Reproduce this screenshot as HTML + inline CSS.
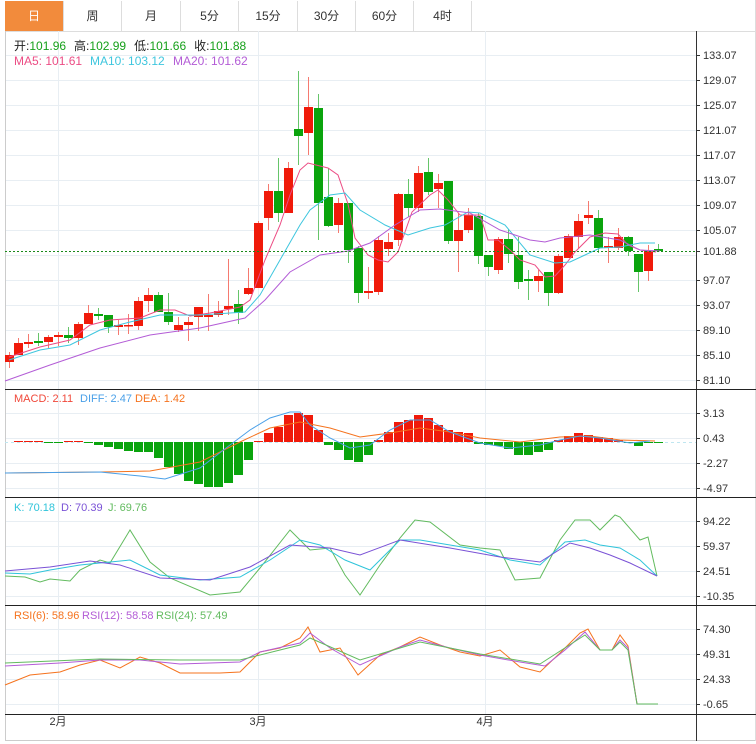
<!DOCTYPE html>
<html><head><meta charset="utf-8">
<style>
body{margin:0;background:#fff;width:756px;height:744px;overflow:hidden;font-family:"Liberation Sans","Noto Sans CJK SC",sans-serif;}
.tabs{position:absolute;left:5px;top:1px;height:30px;width:750px;border-bottom:1px solid #ddd;}
.tab{position:absolute;top:0;height:30px;line-height:30px;text-align:center;font-size:12px;color:#333;border-right:1px solid #ddd;}
svg{position:absolute;left:0;top:0}
.lb{font-size:12px}
</style></head><body>
<div class="tabs">
<div class="tab" style="left:0;width:58px;background:#f28b3c;color:#fff">日</div>
<div class="tab" style="left:59px;width:57px">周</div>
<div class="tab" style="left:117px;width:58px">月</div>
<div class="tab" style="left:176px;width:57px">5分</div>
<div class="tab" style="left:234px;width:58px">15分</div>
<div class="tab" style="left:293px;width:57px">30分</div>
<div class="tab" style="left:351px;width:57px">60分</div>
<div class="tab" style="left:409px;width:57px">4时</div>
</div>
<svg id="s" width="756" height="744" style="top:0" font-family="Liberation Sans, Noto Sans CJK SC, sans-serif" font-size="11"></svg>
<script>
var s=document.getElementById('s'),h='';
function L(x1,y1,x2,y2,c,w,d){h+='<line x1="'+x1+'" y1="'+y1+'" x2="'+x2+'" y2="'+y2+'" stroke="'+c+'" stroke-width="'+(w||1)+'"'+(d?' stroke-dasharray="'+d+'"':'')+'/>';}
function P(a,c){var p=[];for(var i=0;i<a.length;i+=2)p.push(a[i]+','+a[i+1]);h+='<polyline fill="none" stroke="'+c+'" stroke-width="1" points="'+p.join(' ')+'"/>';}
function T(x,y,t,c,a,cl){h+='<text x="'+x+'" y="'+y+'" fill="'+c+'"'+(a?' text-anchor="'+a+'"':'')+(cl?' class="lb"':'')+'>'+t+'</text>';}
var G='#e8eef3';
[55,80,105,130,155,180,205,230,255,280,305,330,355,380].forEach(function(y){L(5,y+.5,696,y+.5,G)});
[413,438,463,488,521,546,571,596,629,654,679,704].forEach(function(y){L(5,y+.5,696,y+.5,G)});
[58,258,485].forEach(function(x){L(x+.5,31,x+.5,715,G)});
L(5.5,31,5.5,740,'#ccc');L(5,740.5,756,740.5,'#ccc');L(755.5,0,755.5,741,'#ddd');
L(696.5,31,696.5,741,'#333');
[[55,'133.07'],[80,'129.07'],[105,'125.07'],[130,'121.07'],[155,'117.07'],[180,'113.07'],[205,'109.07'],[230,'105.07'],[280,'97.07'],[305,'93.07'],[330,'89.10'],[355,'85.10'],[380,'81.10'],[251,'101.88'],
[413,'3.13'],[438,'0.43'],[463,'-2.27'],[488,'-4.97'],[521,'94.22'],[546,'59.37'],[571,'24.51'],[596,'-10.35'],[629,'74.30'],[654,'49.31'],[679,'24.33'],[704,'-0.65']].forEach(function(a){L(696,a[0]+.5,700,a[0]+.5,'#333');T(703,a[0]+4,a[1],'#333')});
[389.5,497.5,605.5,714.5].forEach(function(y){L(5,y,756,y,'#222')});
T(58,725,'2月','#333','middle');T(258,725,'3月','#333','middle');T(485,725,'4月','#333','middle');
var C=[[9,355,362,352,368,1],[18,343,355,338,355,1],[28,342,344,334,348,1],[38,341,343,333,346,0],[48,337,342,335,348,1],[58,335,337,332,346,1],[68,335,338,327,343,0],[78,324,338,322,345,1],[88,313,324,305,324,1],[98,314,316,308,320,0],[108,315,327,315,333,0],[118,325,327,320,335,1],[128,325,326,314,334,1],[138,301,326,297,330,1],[148,295,301,288,312,1],[158,295,312,292,312,0],[168,312,322,293,325,0],[178,325,330,317,332,1],[188,322,325,317,341,1],[198,307,317,307,331,1],[208,315,317,294,331,1],[218,311,315,301,317,1],[228,306,309,259,315,1],[238,304,313,290,324,0],[248,288,294,268,295,1],[258,223,288,221,288,1],[268,191,218,184,230,1],[278,191,213,158,222,0],[288,168,213,162,213,1],[298,129,136,71,165,0],[308,107,133,77,155,1],[318,108,203,94,240,0],[328,197,226,168,227,0],[338,203,225,198,233,1],[348,203,250,203,263,0],[358,248,293,246,303,0],[368,291,293,267,299,1],[378,240,292,236,295,1],[388,242,249,233,256,1],[398,194,240,193,246,1],[408,194,208,179,217,0],[418,173,208,166,212,1],[428,172,192,158,195,0],[438,183,189,174,208,1],[448,181,241,181,244,0],[458,230,241,213,272,1],[468,215,230,208,233,1],[478,216,256,213,264,0],[488,255,267,255,276,0],[498,239,270,237,274,1],[508,239,254,229,263,0],[518,255,282,237,289,0],[528,279,281,270,300,0],[538,276,281,270,292,1],[548,272,293,272,306,0],[558,256,293,254,294,1],[568,236,258,234,258,1],[578,221,237,214,248,1],[588,215,218,201,224,1],[598,218,248,210,253,0],[608,246,248,237,263,1],[618,237,248,228,250,1],[628,237,251,236,256,0],[638,254,272,254,292,0],[648,251,271,245,281,1],[658,249,251,244,252,0]];
C.forEach(function(c){var col=c[5]?'#f01a0a':'#0aa40d',wc=c[5]?'#f57a70':'#66c56a';L(c[0]+.5,c[3],c[0]+.5,c[4],wc);h+='<rect x="'+(c[0]-4)+'" y="'+c[1]+'" width="9" height="'+Math.max(1.5,c[2]-c[1])+'" fill="'+col+'"/>';});
P([9,357,40,347,70,340,90,325,110,320,140,318,160,310,175,310,190,316,210,313,240,307,250,300,265,260,280,225,290,195,300,170,308,163,328,168,338,175,348,204,355,238,368,255,378,260,388,262,398,252,412,212,430,195,438,190,448,200,460,215,480,215,488,240,498,240,510,250,520,260,535,265,545,277,555,276,565,265,575,252,590,237,605,233,618,234,628,245,640,250,656,252],'#ec4c84');
P([9,360,40,350,70,345,100,330,130,322,160,315,200,315,245,312,260,295,280,260,300,225,310,210,330,195,345,193,360,210,385,225,408,235,430,228,445,225,468,212,480,213,505,225,530,255,555,263,570,262,585,255,600,248,620,247,640,243,655,243],'#3ec6de');
P([5,381,50,365,100,348,150,335,200,328,245,318,265,300,290,272,320,255,348,251,370,243,395,225,420,210,440,209,470,213,500,230,530,240,545,242,560,238,590,235,620,240,640,250,660,251],'#b35cd6');
L(5,251.5,696,251.5,'#1a8a1a',1,'2,2');
L(5,442.5,696,442.5,'#bfe6f0',1,'3,3');
var M=[441,441,441,442,442,441,441,443,445,447,449,451,452,452,458,467,474,481,484,487,487,483,475,460,441,433,427,415,413,415,430,445,450,460,462,455,440,432,422,420,415,418,425,430,432,433,444,445,446,449,455,455,452,450,440,436,433,435,437,438,440,443,446,443,442];
M.forEach(function(v,i){var x=C[i+1][0];if(Math.abs(v-442)<1)v=v<442?441:443;var t=Math.min(v,442),b=Math.max(v,442);h+='<rect x="'+(x-4)+'" y="'+t+'" width="9" height="'+(b-t)+'" fill="'+(v<442?'#f01a0a':'#0aa40d')+'"/>';});
P([5,473,100,472,150,471,200,462,240,442,270,428,300,422,330,428,360,437,390,433,420,428,450,432,480,438,520,442,560,437,590,436,620,440,655,441],'#f5731e');
P([5,473,100,472,140,476,165,479,200,468,230,445,250,430,270,418,290,412,300,412,310,425,330,438,350,448,370,445,390,430,410,420,430,420,450,432,480,443,510,448,540,445,560,440,580,436,600,438,630,443,650,441],'#4aa0e8');
P([5,576,25,577,40,582,50,579,70,581,80,570,100,560,110,563,130,530,150,562,170,578,210,595,240,592,260,568,290,530,310,550,330,548,345,575,360,595,380,565,400,538,415,520,430,522,460,545,480,548,500,550,515,580,540,578,560,540,575,520,590,520,600,530,615,515,620,517,640,540,648,537,657,576],'#62bb5f');
P([5,573,30,574,50,570,80,565,100,563,130,560,160,575,200,580,240,577,270,560,300,540,320,545,345,560,370,570,400,540,420,540,450,545,480,550,510,560,540,565,565,542,585,540,600,545,620,548,640,560,657,576],'#2fc4da');
P([5,571,50,567,90,561,120,565,160,578,210,580,250,567,290,545,330,548,360,555,400,540,450,548,500,557,540,562,570,543,590,548,610,555,630,563,657,576],'#7a52d6');
P([5,685,30,675,60,672,80,665,100,660,120,668,140,657,160,663,180,673,220,673,240,672,260,652,280,648,300,638,308,627,320,652,340,648,358,675,380,655,400,647,420,637,440,645,460,652,480,656,500,650,520,667,540,672,560,653,580,633,588,629,600,650,612,650,620,635,628,646,637,704,658,704],'#f5731e');
P([5,666,60,663,100,660,140,660,180,664,240,662,260,652,300,643,310,633,330,648,360,665,400,647,420,640,450,648,480,655,520,662,545,666,565,650,585,632,600,650,612,650,620,640,628,648,637,704,658,704],'#b35cd6');
P([5,663,100,659,180,660,240,660,300,645,310,638,360,660,420,642,480,654,540,664,585,635,600,650,612,650,620,642,628,650,637,704,658,704],'#62bb5f');
h+='<text x="14" y="50" class="lb" fill="#222">开:<tspan fill="#16a01a">101.96</tspan><tspan dx="8">高:</tspan><tspan fill="#16a01a">102.99</tspan><tspan dx="8">低:</tspan><tspan fill="#16a01a">101.66</tspan><tspan dx="8">收:</tspan><tspan fill="#16a01a">101.88</tspan></text>';
T(14,65,'MA5: 101.61','#ec4c84',0,1);T(90,65,'MA10: 103.12','#3ec6de',0,1);T(173,65,'MA20: 101.62','#b35cd6',0,1);
T(14,402,'MACD: 2.11','#f0483a');T(80,402,'DIFF: 2.47','#4aa0e8');T(135,402,'DEA: 1.42','#f5731e');
T(14,511,'K: 70.18','#2fc4da');T(61,511,'D: 70.39','#7a52d6');T(108,511,'J: 69.76','#62bb5f');
T(14,619,'RSI(6): 58.96','#f5731e');T(82,619,'RSI(12): 58.58','#b35cd6');T(156,619,'RSI(24): 57.49','#62bb5f');
s.innerHTML=h;
</script>
</body></html>
